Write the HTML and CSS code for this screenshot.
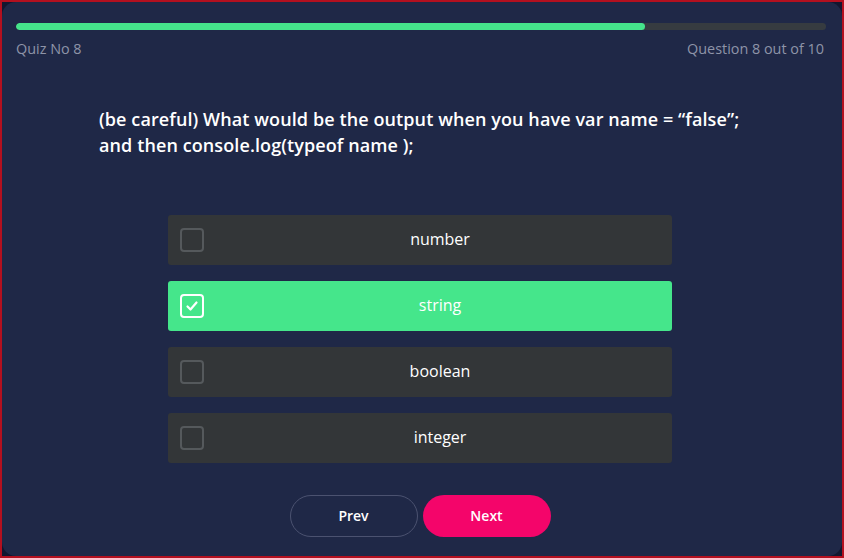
FILE: index.html
```html
<!DOCTYPE html>
<html>
<head>
  <title>Quiz</title>
  <link rel="stylesheet" href="styles.css">
</head>
<body>
  <div class="frame">
    <div class="card">
      <div class="progress">
        <div class="progress-fill" style="width: 77.7%"></div>
      </div>
      <div class="meta">
        <span>Quiz No 8</span>
        <span>Question 8 out of 10</span>
      </div>
      <h2 class="question">(be careful) What would be the output when you have var name = “false”; and then console.log(typeof name );</h2>
      <div class="options">
        <div class="option">
          <span class="check"></span>
          <span class="label">number</span>
        </div>
        <div class="option selected">
          <span class="check">
            <svg width="16" height="16" viewBox="0 0 16 16"><path d="M3.5 8.5l3 3 6-7" fill="none" stroke="#fff" stroke-width="2.2" stroke-linecap="round" stroke-linejoin="round"/></svg>
          </span>
          <span class="label">string</span>
        </div>
        <div class="option">
          <span class="check"></span>
          <span class="label">boolean</span>
        </div>
        <div class="option">
          <span class="check"></span>
          <span class="label">integer</span>
        </div>
      </div>
      <div class="buttons">
        <button class="btn prev">Prev</button>
        <button class="btn next">Next</button>
      </div>
    </div>
  </div>
</body>
</html>
```
FILE: styles.css
```css
body {
  margin: 0;
  font-family: "Open Sans", Arial, sans-serif;
  background-color: #141a33;
}
.frame {
  width: 844px;
  height: 558px;
  box-sizing: border-box;
  border: 2px solid #b3101f;
  background-color: #121730;
}
.card {
  height: 100%;
  box-sizing: border-box;
  padding: 21px 16px 0 14px;
  background-color: #1f2847;
  border-radius: 14px;
}
.progress {
  height: 7px;
  border-radius: 4px;
  background-color: #363b40;
  overflow: hidden;
}
.progress-fill {
  height: 100%;
  border-radius: 4px;
  background-color: #45e48b;
}
.meta {
  display: flex;
  justify-content: space-between;
  margin-top: 9px;
  padding-right: 2px;
  font-size: 14.4px;
  color: #8e94a8;
}
.question {
  margin: 48px 0 0 83px;
  width: 655px;
  font-size: 18px;
  font-weight: 600;
  line-height: 26px;
  letter-spacing: 0.1px;
  color: #ffffff;
}
.options {
  display: grid;
  gap: 16px;
  width: 504px;
  margin: 57px 0 0 152px;
}
.option {
  display: flex;
  align-items: center;
  height: 50px;
  border-radius: 3px;
  background-color: #333638;
  color: #ffffff;
  font-size: 16px;
}
.option.selected {
  background-color: #45e68b;
}
.check {
  width: 20px;
  height: 20px;
  margin-left: 12px;
  border: 2px solid #55595c;
  border-radius: 4px;
  display: flex;
  align-items: center;
  justify-content: center;
}
.selected .check {
  border-color: #ffffff;
}
.label {
  flex: 1;
  padding: 0 0 3px 4px;
  text-align: center;
}
.buttons {
  display: flex;
  justify-content: center;
  gap: 5px;
  margin-top: 32px;
  padding-right: 2px;
}
.btn {
  width: 128px;
  height: 42px;
  padding-bottom: 2px;
  border-radius: 21px;
  font-family: "Open Sans", Arial, sans-serif;
  font-size: 14px;
  font-weight: 600;
  color: #ffffff;
  cursor: pointer;
}
.prev {
  border: 1px solid #4b5270;
  background-color: transparent;
}
.next {
  border: none;
  background-color: #f4056a;
}
```
